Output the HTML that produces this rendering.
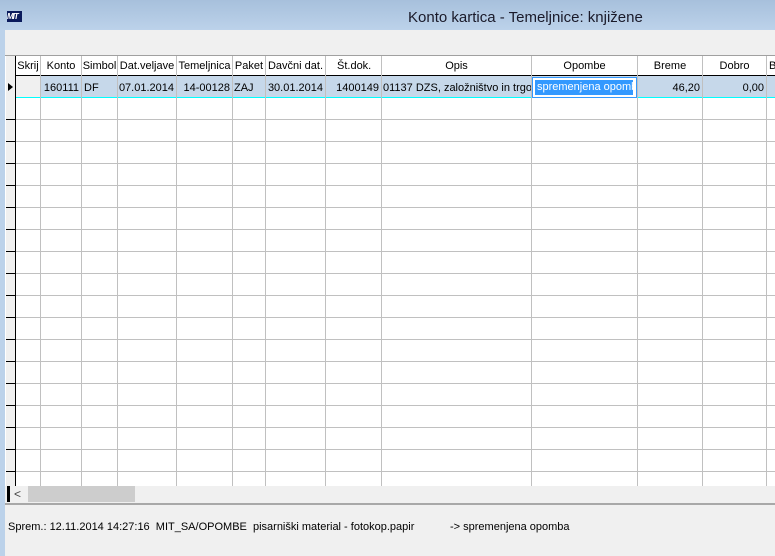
<!DOCTYPE html>
<html><head><meta charset="utf-8"><style>
*{margin:0;padding:0;box-sizing:border-box}
body{width:775px;height:556px;overflow:hidden;position:relative;background:#f0f0f0;font-family:"Liberation Sans",sans-serif;font-size:11px;color:#000}
.a{position:absolute}
.h{position:absolute;top:57px;height:19px;line-height:19px;text-align:center;white-space:nowrap;overflow:hidden}
.d{position:absolute;top:77px;height:21px;line-height:22px;white-space:nowrap;overflow:hidden}
.v{position:absolute;width:1px;background:#c0c0c0}
.hr{position:absolute;height:1px;background:#c0c0c0;left:16px;right:0}
</style></head><body>
<div class="a" style="left:0;top:0;width:775px;height:30px;background:linear-gradient(#a7c0dc,#bcd2ea)"></div>
<div class="a" style="left:0;top:30px;width:5px;height:526px;background:#bcd2ea"></div>
<div class="a" style="left:7px;top:11px;width:15px;height:11px;background:#0a1a5c;color:#fff;font-size:8px;font-weight:bold;font-style:italic;line-height:11px;letter-spacing:-1px">MIT</div>
<div class="a" style="left:408px;top:9px;font-size:15px;color:#1a1a2a">Konto kartica - Temeljnice: knjižene</div>
<div class="a" style="left:5px;top:30px;width:770px;height:25px;background:#f0f0f0"></div>
<div class="a" style="left:5px;top:55px;width:770px;height:431px;background:#fff"></div>
<div class="a" style="left:5px;top:55px;width:770px;height:1px;background:#a0a0a0"></div>
<div class="a" style="left:6px;top:56px;width:9px;height:430px;background:#f0f0f0"></div>
<div class="a" style="left:15px;top:56px;width:1px;height:430px;background:#000"></div>
<div class="a" style="left:16px;top:75px;width:759px;height:1px;background:#000"></div>
<div class="a" style="left:16px;top:76px;width:759px;height:21px;background:#c6d8ea"></div>
<div class="a" style="left:16px;top:76px;width:24px;height:21px;background:#f0f0f0"></div>
<div class="a" style="left:16px;top:97px;width:759px;height:1px;background:#0ff"></div>
<div class="a" style="left:8px;top:83px;width:0;height:0;border-top:4px solid transparent;border-bottom:4px solid transparent;border-left:5px solid #000"></div>
<div class="hr" style="top:119px"></div><div class="hr" style="top:141px"></div><div class="hr" style="top:163px"></div><div class="hr" style="top:185px"></div><div class="hr" style="top:207px"></div><div class="hr" style="top:229px"></div><div class="hr" style="top:251px"></div><div class="hr" style="top:273px"></div><div class="hr" style="top:295px"></div><div class="hr" style="top:317px"></div><div class="hr" style="top:339px"></div><div class="hr" style="top:361px"></div><div class="hr" style="top:383px"></div><div class="hr" style="top:405px"></div><div class="hr" style="top:427px"></div><div class="hr" style="top:449px"></div><div class="hr" style="top:471px"></div>
<div class="a" style="left:6px;top:119px;width:9px;height:1px;background:#000"></div><div class="a" style="left:6px;top:141px;width:9px;height:1px;background:#000"></div><div class="a" style="left:6px;top:163px;width:9px;height:1px;background:#000"></div><div class="a" style="left:6px;top:185px;width:9px;height:1px;background:#000"></div><div class="a" style="left:6px;top:207px;width:9px;height:1px;background:#000"></div><div class="a" style="left:6px;top:229px;width:9px;height:1px;background:#000"></div><div class="a" style="left:6px;top:251px;width:9px;height:1px;background:#000"></div><div class="a" style="left:6px;top:273px;width:9px;height:1px;background:#000"></div><div class="a" style="left:6px;top:295px;width:9px;height:1px;background:#000"></div><div class="a" style="left:6px;top:317px;width:9px;height:1px;background:#000"></div><div class="a" style="left:6px;top:339px;width:9px;height:1px;background:#000"></div><div class="a" style="left:6px;top:361px;width:9px;height:1px;background:#000"></div><div class="a" style="left:6px;top:383px;width:9px;height:1px;background:#000"></div><div class="a" style="left:6px;top:405px;width:9px;height:1px;background:#000"></div><div class="a" style="left:6px;top:427px;width:9px;height:1px;background:#000"></div><div class="a" style="left:6px;top:449px;width:9px;height:1px;background:#000"></div><div class="a" style="left:6px;top:471px;width:9px;height:1px;background:#000"></div>
<div class="v" style="left:40px;top:56px;height:430px"></div>
<div class="v" style="left:81px;top:56px;height:430px"></div>
<div class="v" style="left:117px;top:56px;height:430px"></div>
<div class="v" style="left:176px;top:56px;height:430px"></div>
<div class="v" style="left:232px;top:56px;height:430px"></div>
<div class="v" style="left:265px;top:56px;height:430px"></div>
<div class="v" style="left:325px;top:56px;height:430px"></div>
<div class="v" style="left:381px;top:56px;height:430px"></div>
<div class="v" style="left:531px;top:56px;height:430px"></div>
<div class="v" style="left:637px;top:56px;height:430px"></div>
<div class="v" style="left:702px;top:56px;height:430px"></div>
<div class="v" style="left:766px;top:56px;height:430px"></div>
<div class="h" style="left:16px;width:24px">Skrij</div>
<div class="h" style="left:41px;width:40px">Konto</div>
<div class="h" style="left:82px;width:35px">Simbol</div>
<div class="h" style="left:118px;width:58px">Dat.veljave</div>
<div class="h" style="left:177px;width:55px">Temeljnica</div>
<div class="h" style="left:233px;width:32px">Paket</div>
<div class="h" style="left:266px;width:59px">Davčni dat.</div>
<div class="h" style="left:326px;width:55px;text-align:left;padding-left:11px">Št.dok.</div>
<div class="h" style="left:382px;width:149px">Opis</div>
<div class="h" style="left:532px;width:105px">Opombe</div>
<div class="h" style="left:638px;width:64px">Breme</div>
<div class="h" style="left:703px;width:63px">Dobro</div>
<div class="h" style="left:767px;width:8px;text-align:left;padding-left:2px">B</div>
<div class="d" style="left:41px;width:38px;text-align:right">160111</div>
<div class="d" style="left:84px">DF</div>
<div class="d" style="left:118px;width:56px;text-align:right">07.01.2014</div>
<div class="d" style="left:177px;width:53px;text-align:right">14-00128</div>
<div class="d" style="left:234px">ZAJ</div>
<div class="d" style="left:266px;width:57px;text-align:right">30.01.2014</div>
<div class="d" style="left:326px;width:53px;text-align:right">1400149</div>
<div class="d" style="left:383px;width:148px">01137 DZS, založništvo in trgo</div>
<div class="a" style="left:532px;top:77px;width:105px;height:21px;border:1px solid #3399ff;background:#fff"></div>
<div class="a" style="left:535px;top:80px;width:98px;height:15px;background:#3399ff;color:#fff;line-height:15px;white-space:nowrap;overflow:hidden;padding-left:2px">spremenjena opomb</div>
<div class="d" style="left:638px;width:62px;text-align:right">46,20</div>
<div class="d" style="left:703px;width:61px;text-align:right">0,00</div>
<div class="a" style="left:5px;top:486px;width:770px;height:17px;background:#f0f0f0"></div>
<div class="a" style="left:7px;top:486px;width:3px;height:16px;background:#000"></div>
<div class="a" style="left:14px;top:486px;font-size:12px;line-height:16px;color:#444">&lt;</div>
<div class="a" style="left:28px;top:486px;width:107px;height:16px;background:#cdcdcd"></div>
<div class="a" style="left:5px;top:503px;width:770px;height:2px;background:#a8a8a8"></div>
<div class="a" style="left:8px;top:521px;white-space:pre">Sprem.: 12.11.2014 14:27:16  MIT_SA/OPOMBE  pisarniški material - fotokop.papir</div>
<div class="a" style="left:450px;top:521px;white-space:pre">-&gt; spremenjena opomba</div>
</body></html>
